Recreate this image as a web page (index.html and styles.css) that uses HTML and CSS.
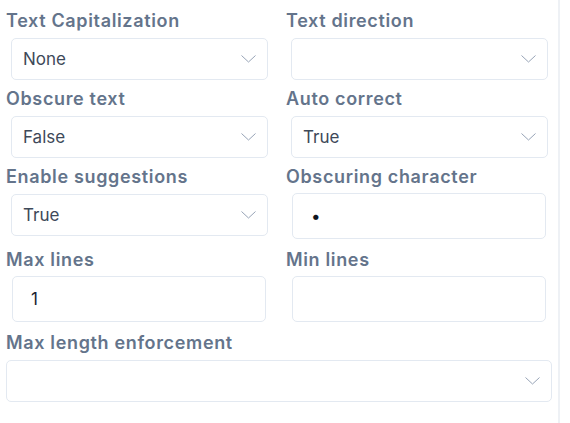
FILE: index.html
```html
<!DOCTYPE html>
<html>
<head>
<meta charset="utf-8">
<link rel="stylesheet" href="styles.css">
</head>
<body>
<div class="panel">
  <div class="grid">
    <div class="field">
      <div class="label">Text Capitalization</div>
      <div class="select"><span class="value">None</span><svg class="chev" viewBox="0 0 15 8"><path d="M0.5 0.5 L7.5 7 L14.5 0.5"/></svg></div>
    </div>
    <div class="field">
      <div class="label">Text direction</div>
      <div class="select"><span class="value"></span><svg class="chev" viewBox="0 0 15 8"><path d="M0.5 0.5 L7.5 7 L14.5 0.5"/></svg></div>
    </div>
    <div class="field">
      <div class="label">Obscure text</div>
      <div class="select"><span class="value">False</span><svg class="chev" viewBox="0 0 15 8"><path d="M0.5 0.5 L7.5 7 L14.5 0.5"/></svg></div>
    </div>
    <div class="field">
      <div class="label">Auto correct</div>
      <div class="select"><span class="value">True</span><svg class="chev" viewBox="0 0 15 8"><path d="M0.5 0.5 L7.5 7 L14.5 0.5"/></svg></div>
    </div>
    <div class="field">
      <div class="label">Enable suggestions</div>
      <div class="select"><span class="value">True</span><svg class="chev" viewBox="0 0 15 8"><path d="M0.5 0.5 L7.5 7 L14.5 0.5"/></svg></div>
    </div>
    <div class="field">
      <div class="label">Obscuring character</div>
      <div class="input"><span class="ivalue bullet">•</span></div>
    </div>
    <div class="field">
      <div class="label">Max lines</div>
      <div class="input"><span class="ivalue">1</span></div>
    </div>
    <div class="field">
      <div class="label">Min lines</div>
      <div class="input"><span class="ivalue"></span></div>
    </div>
  </div>
  <div class="field wide">
    <div class="label">Max length enforcement</div>
    <div class="select full"><span class="value"></span><svg class="chev" viewBox="0 0 15 8"><path d="M0.5 0.5 L7.5 7 L14.5 0.5"/></svg></div>
  </div>
</div>
</body>
</html>
```
FILE: styles.css
```css
html, body {
  margin: 0;
  padding: 0;
  background: #ffffff;
}
body {
  font-family: Inter, "Noto Sans", sans-serif;
  width: 570px;
  height: 423px;
  overflow: hidden;
}
.panel {
  width: 552px;
  height: 423px;
  padding: 9px 0 0 6px;
  border-right: 2px solid #eef1f5;
  box-sizing: content-box;
}
.grid {
  display: grid;
  grid-template-columns: 280px 272px;
  align-items: start;
}
.field {
  display: flex;
  flex-direction: column;
}
.label {
  font-size: 18px;
  font-weight: 600;
  line-height: 24px;
  color: #64748b;
  letter-spacing: 0.65px;
  white-space: nowrap;
}
.select {
  box-sizing: border-box;
  width: 257px;
  height: 42px;
  margin: 5px 0 7px 5px;
  border: 1px solid #e3e9f1;
  border-radius: 5px;
  display: flex;
  align-items: center;
  justify-content: space-between;
  padding: 0 11px 0 11px;
}
.select.full {
  width: 546px;
  margin-left: 0;
}
.value {
  font-size: 17px;
  color: #3e4959;
  line-height: 20px;
}
.chev {
  width: 15px;
  height: 8px;
  fill: none;
  stroke: #97a3b6;
  stroke-width: 1;
}
.input {
  box-sizing: border-box;
  width: 254px;
  height: 46px;
  margin: 4px 0 9px 6px;
  border: 1px solid #e3e9f1;
  border-radius: 5px;
  display: flex;
  align-items: center;
  padding: 0 18px;
}
.ivalue {
  font-size: 17px;
  color: #1a2130;
  line-height: 20px;
}
.bullet {
  color: #0f1420;
}
```
